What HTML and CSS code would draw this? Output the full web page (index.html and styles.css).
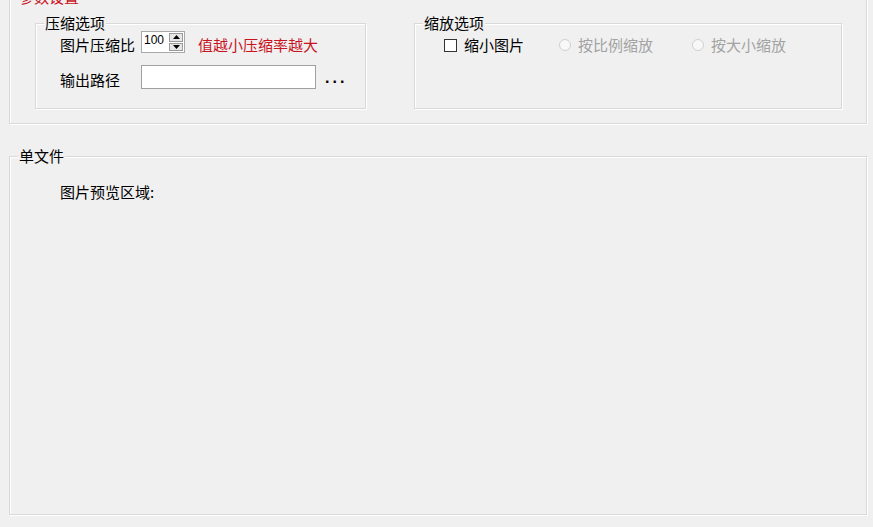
FILE: index.html
```html
<!DOCTYPE html>
<html lang="zh-CN">
<head>
<meta charset="utf-8">
<title>参数设置</title>
<link rel="stylesheet" href="styles.css">
</head>
<body>
<div class="page">
  <section class="group group-params">
    <span class="legend legend-red">参数设置</span>
    <div class="group-row">
      <section class="group box-compress">
        <span class="legend">压缩选项</span>
        <div class="field-row row-ratio">
          <span class="label">图片压缩比</span>
          <div class="spin">
            <span class="spin-value">100</span>
            <div class="spin-btns">
              <span class="spin-btn"><svg width="7" height="4" viewBox="0 0 7 4"><path d="M0 4 L3.5 0 L7 4 Z" fill="#000"/></svg></span>
              <span class="spin-btn"><svg width="7" height="4" viewBox="0 0 7 4"><path d="M0 0 L7 0 L3.5 4 Z" fill="#000"/></svg></span>
            </div>
          </div>
          <span class="hint">值越小压缩率越大</span>
        </div>
        <div class="field-row row-path">
          <span class="label">输出路径</span>
          <div class="textbox"></div>
          <span class="dots">...</span>
        </div>
      </section>
      <section class="group box-scale">
        <span class="legend">缩放选项</span>
        <div class="option-row">
          <span class="checkbox"></span>
          <span class="opt-label">缩小图片</span>
          <span class="radio radio-first"></span>
          <span class="opt-label disabled">按比例缩放</span>
          <span class="radio radio-second"></span>
          <span class="opt-label disabled">按大小缩放</span>
        </div>
      </section>
    </div>
  </section>
  <section class="group group-single">
    <span class="legend">单文件</span>
    <p class="preview-label">图片预览区域:</p>
  </section>
</div>
</body>
</html>
```

FILE: styles.css
```css
html, body {
  margin: 0;
  padding: 0;
}
body {
  width: 873px;
  height: 527px;
  overflow: hidden;
  background: #f0f0f0;
  font-family: "Noto Sans CJK SC", "Noto Sans", sans-serif;
  font-size: 15px;
  color: #000;
}
.page {
  padding: 0 6px 0 9px;
}
.group {
  position: relative;
  box-sizing: border-box;
  border: 1px solid #d9d9d9;
  box-shadow: inset 1px 1px 0 #fff, 1px 1px 0 #fff;
}
.legend {
  position: absolute;
  top: -10px;
  left: 8px;
  padding: 0 1px;
  line-height: 18px;
  background: #f0f0f0;
  white-space: nowrap;
}
.legend-red {
  top: -10px;
  color: #c8141e;
}
.group-params {
  margin-top: -3px;
  height: 127px;
  padding: 25px 0 0 25px;
}
.group-row {
  display: flex;
  gap: 48px;
}
.box-compress {
  width: 331px;
  height: 86px;
  padding: 7px 0 0 24px;
}
.box-scale {
  width: 428px;
  height: 86px;
  padding: 12px 0 0 29px;
}
.field-row {
  display: flex;
  align-items: center;
}
.row-ratio {
  height: 22px;
}
.row-path {
  height: 24px;
  margin-top: 12px;
}
.label {
  width: 81px;
  line-height: 18px;
  padding-top: 6px;
  white-space: nowrap;
}
.spin {
  box-sizing: border-box;
  width: 44px;
  height: 22px;
  border: 1px solid #a9a9a9;
  background: #fff;
  display: flex;
  justify-content: space-between;
}
.spin-value {
  font-family: "Liberation Sans", Arial, sans-serif;
  font-size: 12px;
  line-height: 14px;
  padding: 1px 0 0 2px;
}
.spin-btns {
  display: flex;
  flex-direction: column;
  gap: 1px;
  padding: 1px;
}
.spin-btn {
  box-sizing: border-box;
  width: 14px;
  height: 9px;
  border: 1px solid #9a9a9a;
  background: #e6e6e6;
  display: flex;
  align-items: center;
  justify-content: center;
}
.spin-btn svg {
  display: block;
}
.hint {
  margin-left: 13px;
  padding-top: 6px;
  line-height: 18px;
  color: #c8141e;
  white-space: nowrap;
}
.textbox {
  box-sizing: border-box;
  width: 175px;
  height: 24px;
  border: 1px solid #a0a0a0;
  background: #fff;
}
.dots {
  margin-left: 9px;
  padding-top: 2px;
  font-family: "Liberation Sans", Arial, sans-serif;
  font-size: 16px;
  font-weight: bold;
  color: #000;
  letter-spacing: 3px;
  line-height: 18px;
}
.option-row {
  display: flex;
  align-items: center;
  height: 18px;
}
.checkbox {
  box-sizing: border-box;
  width: 13px;
  height: 13px;
  border: 1px solid #333;
  background: #fff;
  margin-right: 7px;
}
.opt-label {
  line-height: 18px;
  white-space: nowrap;
}
.disabled {
  color: #a3a3a3;
}
.radio {
  box-sizing: border-box;
  width: 12px;
  height: 12px;
  border-radius: 50%;
  border: 1px solid #d0d0d0;
  background: #f8f8f8;
  margin-right: 7px;
}
.radio-first {
  margin-left: 35px;
}
.radio-second {
  margin-left: 39px;
}
.group-single {
  margin-top: 32px;
  height: 359px;
  padding: 26px 0 0 50px;
}
.preview-label {
  margin: 0;
  line-height: 18px;
}
```
